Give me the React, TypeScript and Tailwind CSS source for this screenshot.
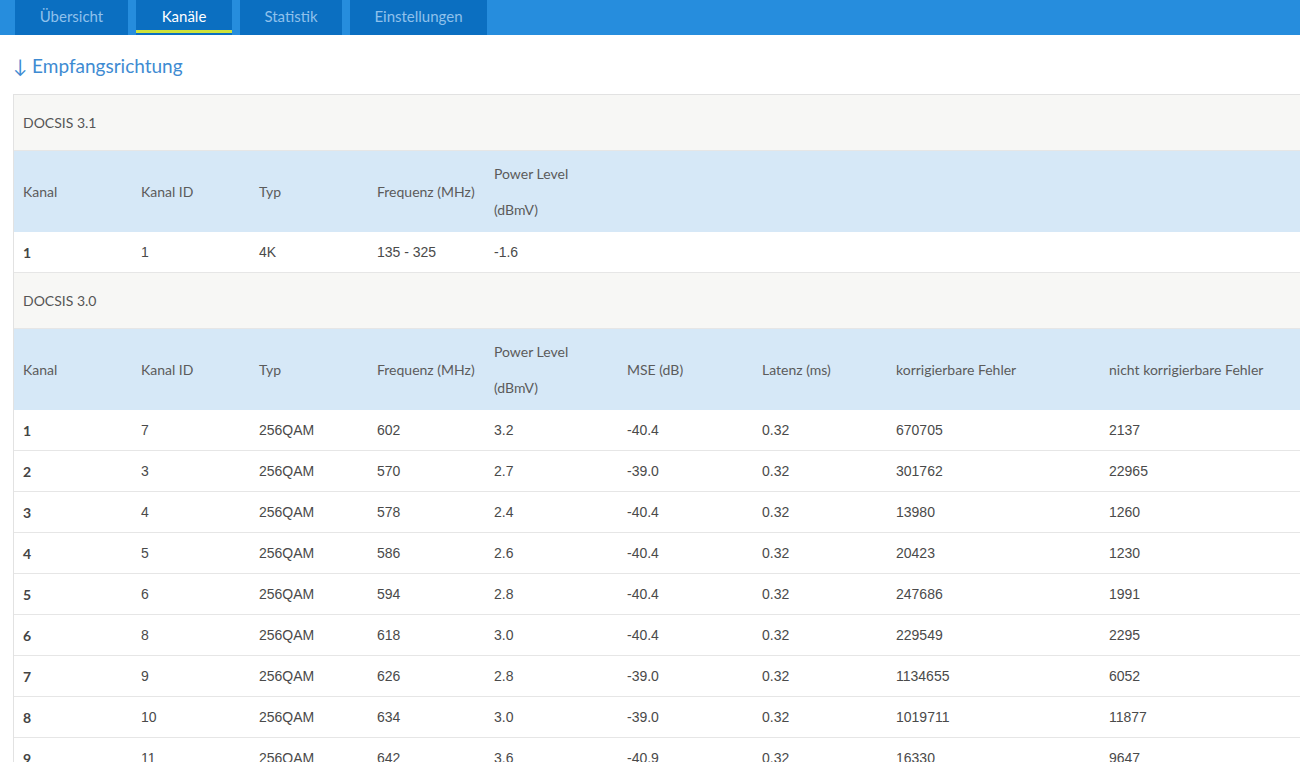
import React from "react";

const tabs = ["Übersicht", "Kanäle", "Statistik", "Einstellungen"];
const tabWidths = ["w-[113px]", "w-[96px]", "w-[102px]", "w-[137px]"];

const cols = ["w-[118px]", "w-[118px]", "w-[118px]", "w-[117px]", "w-[133px]", "w-[135px]", "w-[134px]", "w-[213px]", "flex-1"];

const rows30 = [
  ["1", "7", "256QAM", "602", "3.2", "-40.4", "0.32", "670705", "2137"],
  ["2", "3", "256QAM", "570", "2.7", "-39.0", "0.32", "301762", "22965"],
  ["3", "4", "256QAM", "578", "2.4", "-40.4", "0.32", "13980", "1260"],
  ["4", "5", "256QAM", "586", "2.6", "-40.4", "0.32", "20423", "1230"],
  ["5", "6", "256QAM", "594", "2.8", "-40.4", "0.32", "247686", "1991"],
  ["6", "8", "256QAM", "618", "3.0", "-40.4", "0.32", "229549", "2295"],
  ["7", "9", "256QAM", "626", "2.8", "-39.0", "0.32", "1134655", "6052"],
  ["8", "10", "256QAM", "634", "3.0", "-39.0", "0.32", "1019711", "11877"],
  ["9", "11", "256QAM", "642", "3.6", "-40.9", "0.32", "16330", "9647"],
];

const head = ["Kanal", "Kanal ID", "Typ", "Frequenz (MHz)", "Power Level", "MSE (dB)", "Latenz (ms)", "korrigierbare Fehler", "nicht korrigierbare Fehler"];

function Section({ title }: { title: string }) {
  return (
    <div className="h-[56px] flex items-center pl-[9px] bg-[#f7f7f5] border-b border-[#e6e6e6] text-[14px] text-[#555]">
      {title}
    </div>
  );
}

function HeadRow({ count }: { count: number }) {
  return (
    <div className="h-[81px] flex bg-[#d6e8f7] text-[14px] text-[#5b5b5b]">
      {head.slice(0, count).map((h, i) => (
        <div key={h} className={`${cols[i]} shrink-0 pl-[9px] flex items-center`}>
          {h === "Power Level" ? (
            <div className="leading-[36px]">
              Power Level
              <br />
              (dBmV)
            </div>
          ) : (
            h
          )}
        </div>
      ))}
      {count < cols.length && <div className="flex-1" />}
    </div>
  );
}

function DataRow({ cells }: { cells: string[] }) {
  return (
    <div className="h-[41px] flex items-center border-b border-[#e6e6e6] bg-white text-[14px] text-[#4a4a4a]">
      {cells.map((c, i) => (
        <div
          key={i}
          className={`${cols[i]} shrink-0 pl-[9px] ${i === 0 ? "font-bold text-[#444]" : "font-['Liberation_Sans',sans-serif]"}`}
        >
          {c}
        </div>
      ))}
      {cells.length < cols.length && <div className="flex-1" />}
    </div>
  );
}

export default function App() {
  return (
    <div className="w-[1300px] min-h-[762px] bg-white font-['Lato',sans-serif] overflow-hidden">
      {/* top nav */}
      <nav className="h-[35px] bg-[#268ddd] flex items-stretch pl-[15px] gap-[8px]">
        {tabs.map((t, i) => (
          <div
            key={t}
            className={`${tabWidths[i]} relative bg-[#0b6fc1] flex items-center justify-center text-[15px] ${i === 1 ? "text-white" : "text-[#8fc1ec]"}`}
          >
            <span className="-mt-[3px]">{t}</span>
            {i === 1 && <div className="absolute left-0 right-0 bottom-[2px] h-[3px] bg-[#cfe23a]" />}
          </div>
        ))}
      </nav>

      <h2 className="pl-[13px] pt-[17px] pb-[14px] text-[19px] leading-[28px] text-[#3e8bd2]">↓ Empfangsrichtung</h2>

      <div className="ml-[13px] border-l border-t border-[#e2e2e2]">
        <Section title="DOCSIS 3.1" />
        <HeadRow count={5} />
        <DataRow cells={["1", "1", "4K", "135 - 325", "-1.6"]} />
        <Section title="DOCSIS 3.0" />
        <HeadRow count={9} />
        {rows30.map((r) => (
          <DataRow key={r[0]} cells={r} />
        ))}
      </div>
    </div>
  );
}
